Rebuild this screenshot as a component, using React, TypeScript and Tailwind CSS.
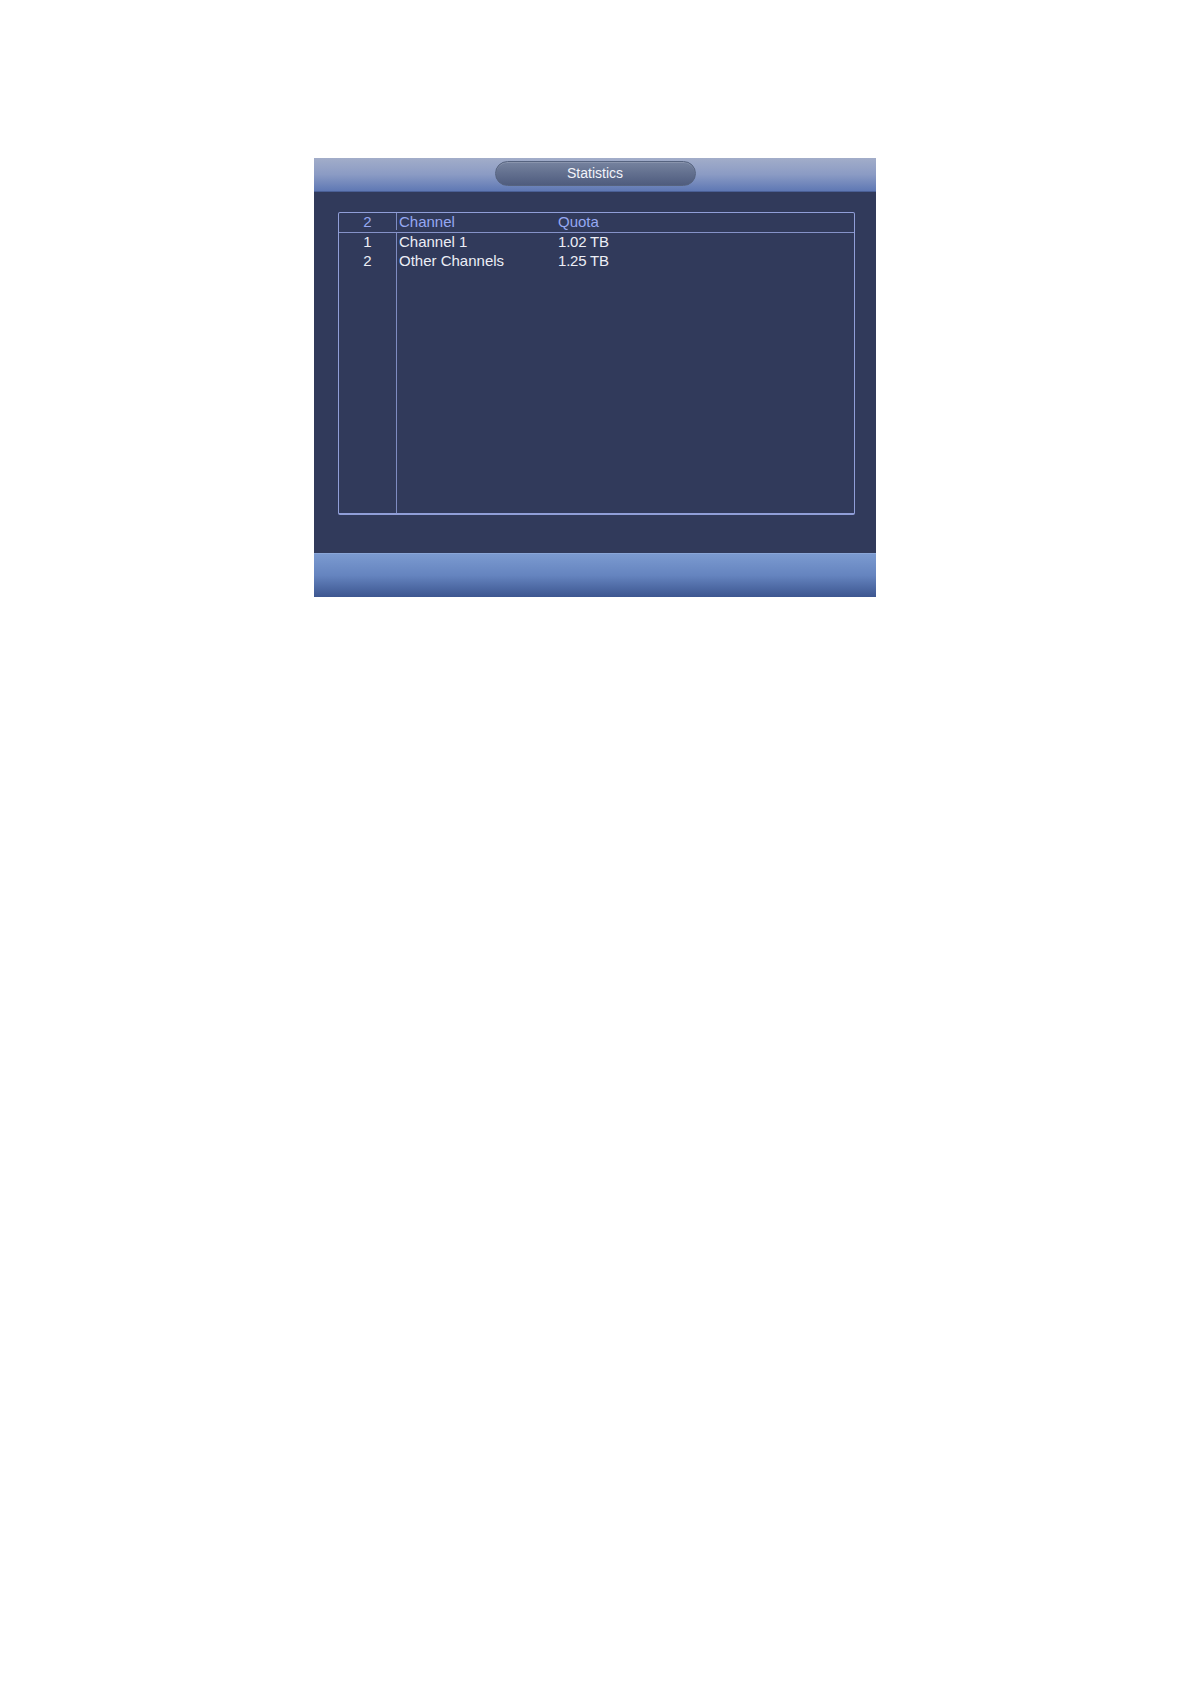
const rows = [
  { no: "1", channel: "Channel 1", quota: "1.02 TB" },
  { no: "2", channel: "Other Channels", quota: "1.25 TB" },
];

export default function App() {
  return (
    <main className="min-h-[1684px] w-full bg-white pt-[158px] pl-[314px] font-['Liberation_Sans',Arial,sans-serif]">
      <div className="flex w-[562px] flex-col bg-[#313a5b]">
        <div className="flex h-[34px] items-start justify-center border-b border-[#4a5f96] bg-gradient-to-b from-[#a2adc9] via-[#8b9bc4] to-[#5f78b4] pt-[3px]">
          <div className="flex h-[25px] w-[201px] items-center justify-center rounded-full border border-[#56637f] bg-gradient-to-b from-[#76839f] to-[#4f5c7e] text-[14px] text-[#f2f4fa] shadow-[inset_0_1px_0_rgba(255,255,255,0.15)]">
            Statistics
          </div>
        </div>

        <div className="h-[361px] pt-[20px] pl-[24px]">
          <div className="flex h-[303px] w-[517px] flex-col rounded-[2px] border border-b-2 border-[#909ed8]">
            <div className="flex h-[20px] shrink-0 items-center border-b border-[#8592c8] pb-[2px] text-[15px] leading-none text-[#96a8f2]">
              <div className="flex h-full w-[58px] items-center justify-center border-r border-[#7f8cc2]">2</div>
              <div className="w-[161px] pl-[2px]">Channel</div>
              <div>Quota</div>
            </div>
            <div className="flex flex-1">
              <div className="flex w-[58px] flex-col border-r border-[#7f8cc2]">
                {rows.map((r) => (
                  <div key={r.no} className="flex h-[19px] items-center justify-center pb-[2px] text-[15px] leading-none text-[#eceef6]">
                    {r.no}
                  </div>
                ))}
              </div>
              <div className="flex flex-1 flex-col">
                {rows.map((r) => (
                  <div key={r.no} className="flex h-[19px] items-center pb-[2px] text-[15px] leading-none text-[#eceef6]">
                    <div className="w-[161px] pl-[2px]">{r.channel}</div>
                    <div className="tracking-[-0.2px]">{r.quota}</div>
                  </div>
                ))}
              </div>
            </div>
          </div>
        </div>

        <div className="h-[44px] border-t border-[#8aa6d8] bg-gradient-to-b from-[#7b9ad0] via-[#6584bf] to-[#3d5690]" />
      </div>
    </main>
  );
}
